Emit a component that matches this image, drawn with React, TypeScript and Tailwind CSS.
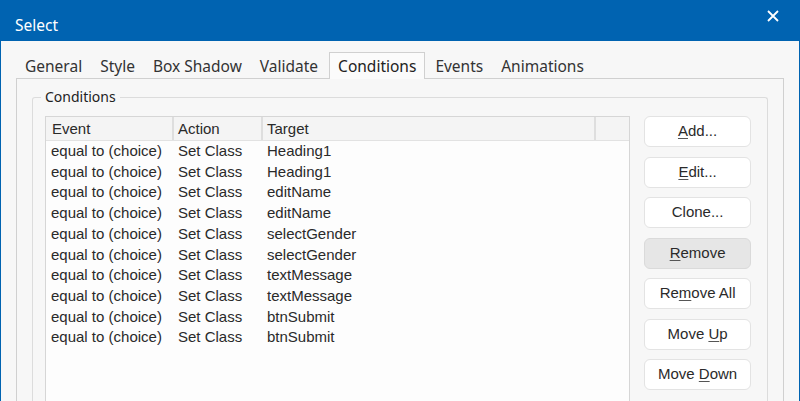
import React from 'react';

const tabs = ['General', 'Style', 'Box Shadow', 'Validate', 'Conditions', 'Events', 'Animations'];

const rows: [string, string, string][] = [
  ['equal to (choice)', 'Set Class', 'Heading1'],
  ['equal to (choice)', 'Set Class', 'Heading1'],
  ['equal to (choice)', 'Set Class', 'editName'],
  ['equal to (choice)', 'Set Class', 'editName'],
  ['equal to (choice)', 'Set Class', 'selectGender'],
  ['equal to (choice)', 'Set Class', 'selectGender'],
  ['equal to (choice)', 'Set Class', 'textMessage'],
  ['equal to (choice)', 'Set Class', 'textMessage'],
  ['equal to (choice)', 'Set Class', 'btnSubmit'],
  ['equal to (choice)', 'Set Class', 'btnSubmit'],
];

// label split around the mnemonic letter
const buttons: { pre: string; key: string; post: string; pressed?: boolean }[] = [
  { pre: '', key: 'A', post: 'dd...' },
  { pre: '', key: 'E', post: 'dit...' },
  { pre: 'Clone...', key: '', post: '' },
  { pre: '', key: 'R', post: 'emove', pressed: true },
  { pre: 'Re', key: 'm', post: 'ove All' },
  { pre: 'Move ', key: 'U', post: 'p' },
  { pre: 'Move ', key: 'D', post: 'own' },
];

const ui = { fontFamily: '"Noto Sans", "Open Sans", sans-serif' };
const arial = { fontFamily: '"Liberation Sans", Arial, sans-serif' };

const App: React.FC = () => {
  return (
    <div className="w-[800px] h-[401px] overflow-hidden flex flex-col bg-[#f7f7f7] border-x border-[#0063b1]" style={ui}>
      {/* title bar */}
      <div className="h-[41px] shrink-0 bg-[#0063b1] flex items-start justify-between pl-[14px] pr-[20px] text-white">
        <span className="text-[15.5px] leading-none pt-[18px]">Select</span>
        <svg width="12" height="12" viewBox="0 0 12 12" className="mt-[10px]">
          <path d="M1 1 L11 11 M11 1 L1 11" stroke="white" strokeWidth="1.8" />
        </svg>
      </div>

      <div className="flex-1 flex flex-col px-[15px] pt-[11px]">
        {/* tabs */}
        <div className="flex h-[27px] relative z-10">
          {tabs.map((t) => {
            const active = t === 'Conditions';
            return (
              <div
                key={t}
                className={
                  active
                    ? 'ml-[2px] mr-[1px] px-[8px] h-[27px] bg-[#fbfbfb] border border-b-0 border-[#d0d0d0] text-[#222] text-[15.5px] leading-[26px]'
                    : 'px-[9px] mt-[1px] h-[26px] text-[#333] text-[15.5px] leading-[26px]'
                }
              >
                {t}
              </div>
            );
          })}
        </div>

        {/* tab panel */}
        <div className="flex-1 -mt-[1px] border border-b-0 border-[#d0d0d0] bg-[#f7f7f7] px-[15px] pt-[18px]">
          <div className="h-full border border-b-0 border-[#dcdcdc] rounded-tl-[3px] rounded-tr-[3px] relative flex gap-[14px] pl-[12px] pr-[16px] pt-[18px]">
            <span className="absolute -top-[11px] left-[8px] px-[4px] bg-[#f7f7f7] text-[14px] leading-[20px] text-[#222]">
              Conditions
            </span>

            {/* list */}
            <div className="w-[586px] border border-b-0 border-[#d6d6d6] bg-[#fdfdfd] self-stretch" style={arial}>
              <div className="flex h-[24px] bg-[#f4f4f4] border-b border-[#e2e2e2] text-[15px] text-[#2a2a2a]">
                <div className="w-[128px] border-r-2 border-[#dedede] pl-[6px] leading-[24px]">Event</div>
                <div className="w-[89px] border-r-2 border-[#dedede] pl-[4px] leading-[24px]">Action</div>
                <div className="w-[333px] border-r-2 border-[#dedede] pl-[4px] leading-[24px]">Target</div>
                <div className="flex-1" />
              </div>
              <div>
                {rows.map((r, i) => (
                  <div key={i} className="flex h-[20.7px] items-center text-[15px] text-[#2a2a2a]">
                    <div className="w-[128px] pl-[5px]">{r[0]}</div>
                    <div className="w-[89px] pl-[4px]">{r[1]}</div>
                    <div className="pl-[4px]">{r[2]}</div>
                  </div>
                ))}
              </div>
            </div>

            {/* buttons */}
            <div className="w-[107px] flex flex-col gap-[9.5px]" style={arial}>
              {buttons.map((b, i) => (
                <div
                  key={i}
                  className={
                    'h-[31px] rounded-[6px] border flex items-center justify-center text-[15px] text-[#2a2a2a] ' +
                    (b.pressed ? 'bg-[#e6e6e6] border-[#dadada]' : 'bg-white border-[#e3e3e3]')
                  }
                >
                  <span className="whitespace-pre">
                    {b.pre}
                    {b.key && <span className="underline underline-offset-[2px] decoration-[#555]">{b.key}</span>}
                    {b.post}
                  </span>
                </div>
              ))}
            </div>
          </div>
        </div>
      </div>
    </div>
  );
};

export default App;
